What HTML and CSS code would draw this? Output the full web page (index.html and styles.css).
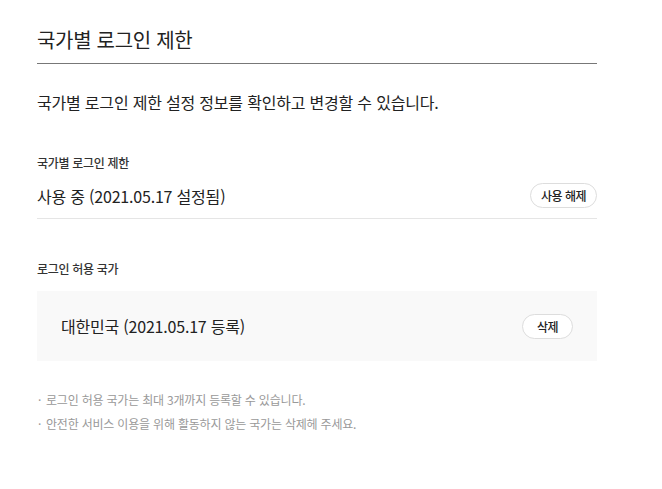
FILE: index.html
```html
<!DOCTYPE html>
<html lang="ko">
<head>
  <meta charset="UTF-8">
  <title>국가별 로그인 제한</title>
  <meta name="viewport" content="width=device-width, initial-scale=1.0">
  <link rel="stylesheet" href="styles.css">
</head>
<body>
  <div class="wrap">
    <h2 class="title">국가별 로그인 제한</h2>
    <p class="desc">국가별 로그인 제한 설정 정보를 확인하고 변경할 수 있습니다.</p>

    <div class="section">
      <h3 class="label">국가별 로그인 제한</h3>
      <div class="status-row">
        <span class="status">사용 중 (2021.05.17 설정됨)</span>
        <button class="btn-round">사용 해제</button>
      </div>
    </div>

    <div class="section">
      <h3 class="label">로그인 허용 국가</h3>
      <div class="country-box">
        <span class="country">대한민국 (2021.05.17 등록)</span>
        <button class="btn-round">삭제</button>
      </div>
    </div>

    <ul class="notes">
      <li>로그인 허용 국가는 최대 3개까지 등록할 수 있습니다.</li>
      <li>안전한 서비스 이용을 위해 활동하지 않는 국가는 삭제헤 주세요.</li>
    </ul>
  </div>
</body>
</html>
```

FILE: styles.css
```css
body { margin: 0; background: #fff; font-family: "Noto Sans CJK KR", "Noto Sans", sans-serif; color: #222; letter-spacing: -0.2px; }
.wrap { width: 560px; padding: 26px 0 0 37px; }
.title { margin: 0; padding-bottom: 9px; font-size: 20px; font-weight: 400; line-height: 28px; letter-spacing: -0.3px; border-bottom: 1px solid #777; }
.desc { margin: 27px 0 0; font-size: 16px; line-height: 22px; }
.section { margin-top: 42px; }
.label { margin: 0; font-size: 12px; font-weight: 500; line-height: 16px; color: #333; letter-spacing: -0.3px; }
.status-row { display: flex; justify-content: space-between; align-items: center; margin-top: 12px; padding-bottom: 10px; border-bottom: 1px solid #e5e5e5; }
.status { font-size: 16px; line-height: 24px; }
.btn-round { height: 25px; padding: 0 10px; border: 1px solid #ddd; border-radius: 13px; background: #fff; font-family: inherit; font-size: 12px; font-weight: 500; color: #222; letter-spacing: -0.5px; cursor: pointer; }
.country-box { display: flex; justify-content: space-between; align-items: center; margin-top: 14px; height: 70px; padding: 0 24px; background: #f9f9f9; }
.country { font-size: 16px; line-height: 24px; }
.country-box .btn-round { width: 51px; padding: 0; }
.notes { margin: 27px 0 0; padding: 0; list-style: none; font-size: 12px; line-height: 24px; color: #999; }
.notes li::before { content: "·"; display: inline-block; width: 8px; margin-left: 1px; }
```
